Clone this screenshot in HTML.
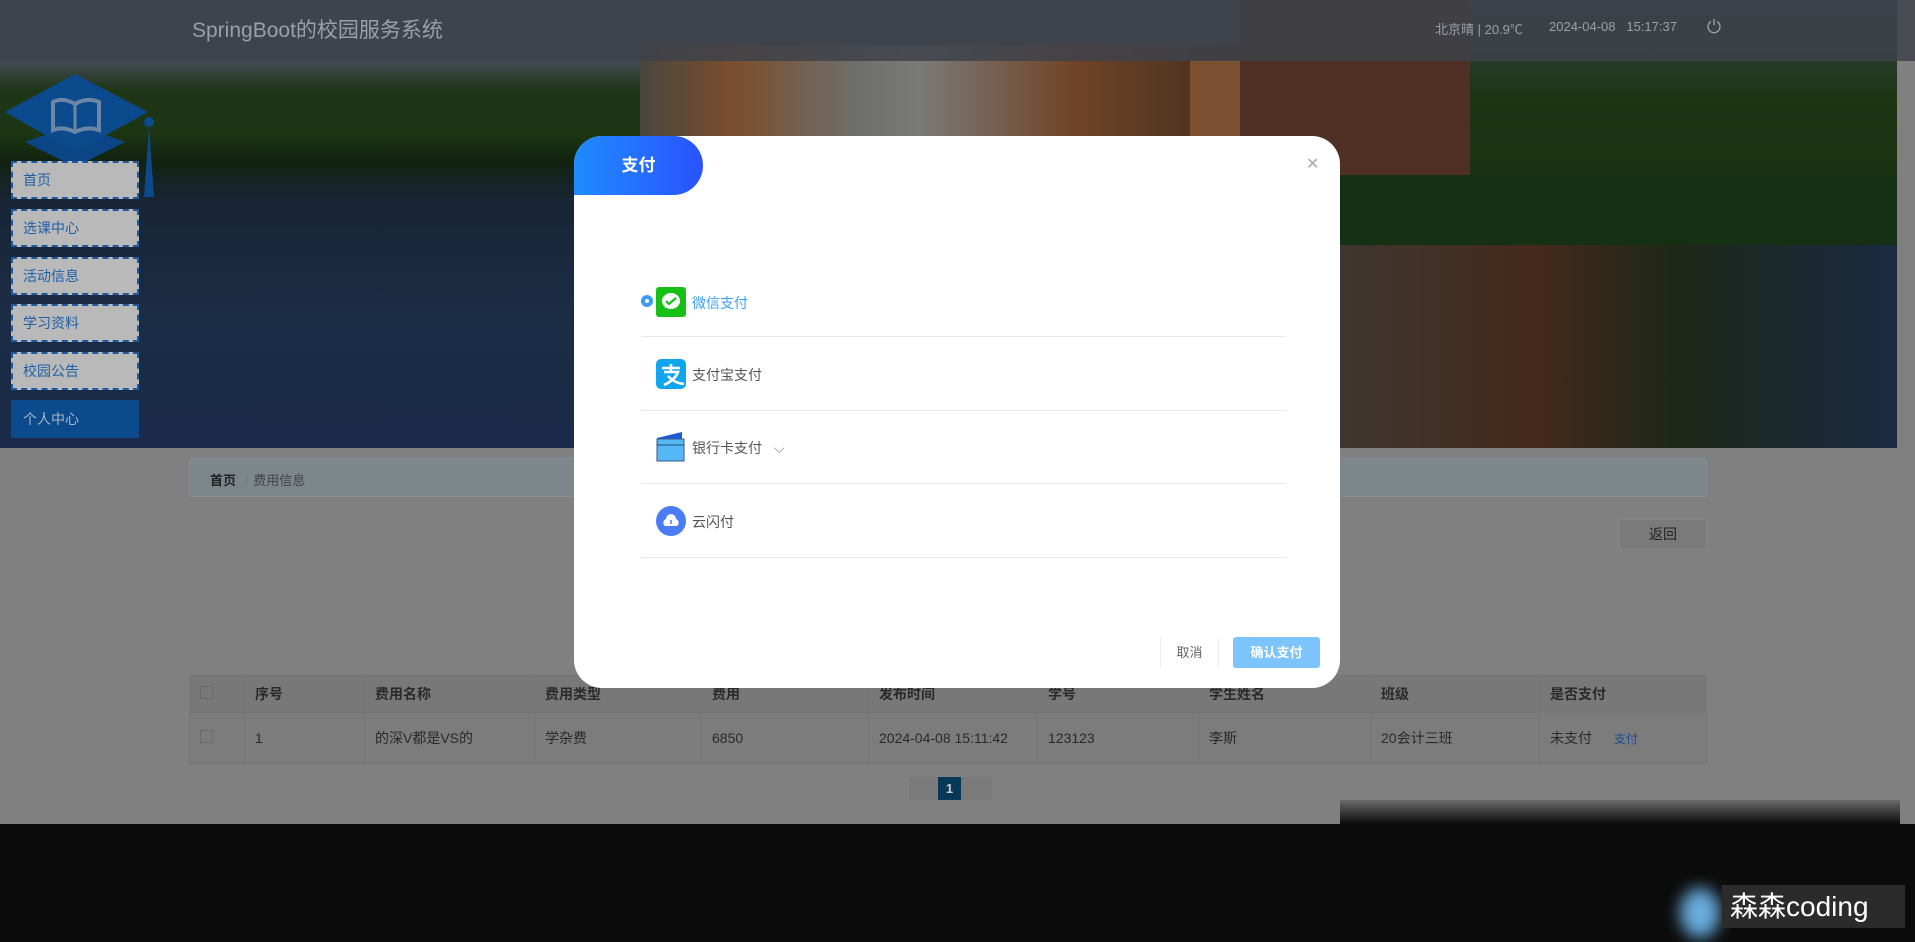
<!DOCTYPE html>
<html><head><meta charset="utf-8"><style>
*{margin:0;padding:0;box-sizing:border-box}
body{width:1915px;height:942px;overflow:hidden;background:#808080;font-family:"Liberation Sans","Noto Sans CJK SC",sans-serif;position:relative}
.abs{position:absolute}
#hero{left:0;top:0;width:1897px;height:448px;overflow:hidden;background:linear-gradient(180deg,#434b55 0%,#414a52 14%,#1f3617 20%,#1c3614 30%,#11220f 36%,#182536 45%,#1b2c45 70%,#1a2a48 100%)}
#hdr{left:0;top:0;width:1915px;height:61px;background:rgba(62,66,74,.85)}
.menu{left:11px;width:128px;height:38px;background:#b9b9b9;border:2px dashed #1d5aa0;color:#1f5fa5;font-size:14px;line-height:34px;padding-left:10px}
th,td{text-align:left;font-weight:normal;padding-left:10px;border-right:1px solid #767676;font-size:14px;color:#2a2a2a}
th{font-weight:bold;height:37px;background:#787878;border-bottom:1px solid #727272}
td{height:51px}
.opt{left:641px;width:645px;height:74px;border-bottom:1px solid #e8e8e8}
.opt span{position:absolute;left:51px;font-size:14px;color:#555}
</style></head><body>
<div id="hero" class="abs">
 <div class="abs" style="left:640px;top:45px;width:620px;height:185px;background:linear-gradient(90deg,#4a4640,#7a4e2c 15%,#6e6e6c 35%,#7a7a78 45%,#704428 70%,#3a2a1e)"></div>
 <div class="abs" style="left:1190px;top:60px;width:210px;height:160px;background:#7a5030"></div>
 <div class="abs" style="left:1240px;top:0;width:230px;height:230px;background:#4e3024"></div>
 <div class="abs" style="left:1470px;top:0;width:427px;height:240px;background:linear-gradient(180deg,#38424c,#1c3614 40%,#163010)"></div>
 <div class="abs" style="left:1340px;top:175px;width:557px;height:70px;background:#153012"></div>
 <div class="abs" style="left:1340px;top:245px;width:557px;height:203px;background:linear-gradient(90deg,#3e3630,#45291a 35%,#1e2818 60%,#1a2a42)"></div>
</div>
<div id="hdr" class="abs"></div>
<div class="abs" style="left:192px;top:14px;font-size:21px;color:#9aa0a8">SpringBoot的校园服务系统</div>
<div class="abs" style="left:1435px;top:19px;font-size:13px;color:#9aa0a8">北京晴 | 20.9℃</div>
<div class="abs" style="left:1549px;top:19px;font-size:13px;color:#9aa0a8">2024-04-08&nbsp;&nbsp;&nbsp;15:17:37</div>
<svg class="abs" style="left:1706px;top:18px" width="16" height="16" viewBox="0 0 16 16"><path d="M5 3.5A6 6 0 1 0 11 3.5M8 1v6" fill="none" stroke="#9aa0a8" stroke-width="1.4"/></svg>
<svg class="abs" style="left:3px;top:72px" width="155" height="130" viewBox="0 0 155 130"><path d="M22 70 L72 95 L122 70 L72 52Z" fill="#0c4586"/><path d="M2 40 L72 2 L145 40 L72 80Z" fill="#0c4a8e"/><path d="M50 30 Q60 25 72 32 Q84 25 96 30 V58 Q84 54 72 60 Q60 54 50 58Z" fill="none" stroke="#6c86a6" stroke-width="4"/><path d="M72 32V60" stroke="#6c86a6" stroke-width="3"/><circle cx="146" cy="50" r="5" fill="#0c4a8e"/><path d="M146 55 L141 125 L151 125Z" fill="#0c4a8e"/></svg>
<div class="abs menu" style="top:161px">首页</div>
<div class="abs menu" style="top:209px">选课中心</div>
<div class="abs menu" style="top:257px">活动信息</div>
<div class="abs menu" style="top:304px">学习资料</div>
<div class="abs menu" style="top:352px">校园公告</div>
<div class="abs menu" style="top:400px;background:#0c4a8e;border-color:#0c4a8e;color:#a9b6c8">个人中心</div>

<div class="abs" style="left:189px;top:458px;width:1518px;height:39px;background:#7d878b;border:1px solid #858f93;border-radius:2px"></div>
<div class="abs" style="left:210px;top:470px;font-size:13px;color:#222;font-weight:bold">首页 <span style="color:#777;font-weight:normal;margin:0 5px">/</span><span style="font-weight:normal;color:#444">费用信息</span></div>
<div class="abs" style="left:1619px;top:519px;width:88px;height:31px;background:#7a7a7a;border:1px solid #858585;font-size:14px;color:#222;text-align:center;line-height:29px">返回</div>

<table class="abs" style="left:189px;top:675px;width:1518px;border-collapse:collapse;border:1px solid #747474;background:#7c7c7c">
<tr><th style="width:55px"><span style="display:inline-block;width:13px;height:13px;border:1px solid #6a6a6a"></span></th><th style="width:120px">序号</th><th style="width:170px">费用名称</th><th style="width:167px">费用类型</th><th style="width:167px">费用</th><th style="width:169px">发布时间</th><th style="width:161px">学号</th><th style="width:172px">学生姓名</th><th style="width:169px">班级</th><th style="border:0">是否支付</th></tr>
<tr><td><span style="display:inline-block;width:13px;height:13px;border:1px solid #6a6a6a"></span></td><td>1</td><td>的深V都是VS的</td><td>学杂费</td><td>6850</td><td>2024-04-08 15:11:42</td><td>123123</td><td>李斯</td><td>20会计三班</td><td style="border:0">未支付 <span style="color:#1a4d99;font-size:12px;margin-left:18px">支付</span></td></tr>
</table>
<div class="abs" style="left:909px;top:777px;width:83px;height:23px;background:#7a7a7a"></div>
<div class="abs" style="left:938px;top:777px;width:23px;height:23px;background:#083858;color:#ccc;font-size:13px;font-weight:bold;text-align:center;line-height:23px">1</div>

<div class="abs" style="left:0;top:824px;width:1915px;height:118px;background:#0b0b0b"></div>
<div class="abs" style="left:1340px;top:800px;width:560px;height:24px;background:linear-gradient(180deg,#6a6a6a,#0b0b0b)"></div>
<div class="abs" style="left:1680px;top:888px;width:40px;height:50px;border-radius:50%;background:#6aaee0;filter:blur(8px)"></div>
<div class="abs" style="left:1722px;top:885px;width:183px;height:43px;background:#2b2b2b;color:#fff;font-size:28px;line-height:43px;padding-left:8px">森森coding</div>

<div class="abs" style="left:574px;top:136px;width:766px;height:552px;background:#fff;border-radius:28px;overflow:hidden">
 <div class="abs" style="left:0;top:0;width:129px;height:59px;background:linear-gradient(90deg,#1e8cff,#2a52ff);border-radius:0 30px 30px 0;color:#fff;font-size:17px;font-weight:bold;line-height:59px;text-align:center">支付</div>
 <div class="abs" style="left:732px;top:18px;color:#aaa;font-size:16px">✕</div>
</div>
<div class="abs opt" style="top:263px"><div class="abs" style="left:0;top:32px;width:12px;height:12px;border-radius:50%;background:#3a9bf5;border:3px solid #3a9bf5"><div style="width:4px;height:4px;margin:1px;border-radius:50%;background:#fff"></div></div>
 <svg class="abs" style="left:15px;top:24px" width="30" height="30" viewBox="0 0 30 30"><rect width="30" height="30" rx="3" fill="#16c016"/><ellipse cx="15" cy="14" rx="9" ry="8" fill="#fff"/><path d="M9 21 l1-4 3 2z" fill="#fff"/><path d="M10 14l3 3 7-6" stroke="#16c016" stroke-width="2.2" fill="none"/></svg>
 <span style="top:30px;color:#3aa0f5">微信支付</span></div>
<div class="abs opt" style="top:337px">
 <svg class="abs" style="left:15px;top:22px" width="30" height="30" viewBox="0 0 30 30"><rect width="30" height="30" rx="5" fill="#0fa6ef"/><path d="M6 9h18M15 5v8M8 13h14q-3 8-14 13M12 17q6 7 16 8" stroke="#fff" stroke-width="2.6" fill="none"/></svg>
 <span style="top:28px">支付宝支付</span></div>
<div class="abs opt" style="top:410px">
 <svg class="abs" style="left:15px;top:22px" width="30" height="30" viewBox="0 0 30 30"><path d="M1 6 L26 0 V8 H1Z" fill="#1e5ad6"/><rect x="1" y="7" width="27" height="22" fill="#56b8f7" stroke="#3a5a80"/><path d="M1 13h27" stroke="#2a4a70"/></svg>
 <span style="top:28px">银行卡支付 <span style="position:static;margin-left:8px;color:#888">⌵</span></span></div>
<div class="abs opt" style="top:484px">
 <svg class="abs" style="left:15px;top:22px" width="30" height="30" viewBox="0 0 30 30"><circle cx="15" cy="15" r="15" fill="#4b7cf5"/><path d="M9 20a4 4 0 0 1 1-7 5 5 0 0 1 10 0 4 4 0 0 1 1 7z" fill="#fff"/><path d="M15 14v4" stroke="#4b7cf5" stroke-width="1.5"/></svg>
 <span style="top:28px">云闪付</span></div>
<div class="abs" style="left:1160px;top:637px;width:59px;height:31px;border-left:1px solid #eee;border-right:1px solid #eee;font-size:13px;color:#666;text-align:center;line-height:31px">取消</div>
<div class="abs" style="left:1233px;top:637px;width:87px;height:31px;background:#7cc4fb;border-radius:3px;font-size:13px;color:#fff;font-weight:bold;text-align:center;line-height:31px">确认支付</div>
</body></html>
